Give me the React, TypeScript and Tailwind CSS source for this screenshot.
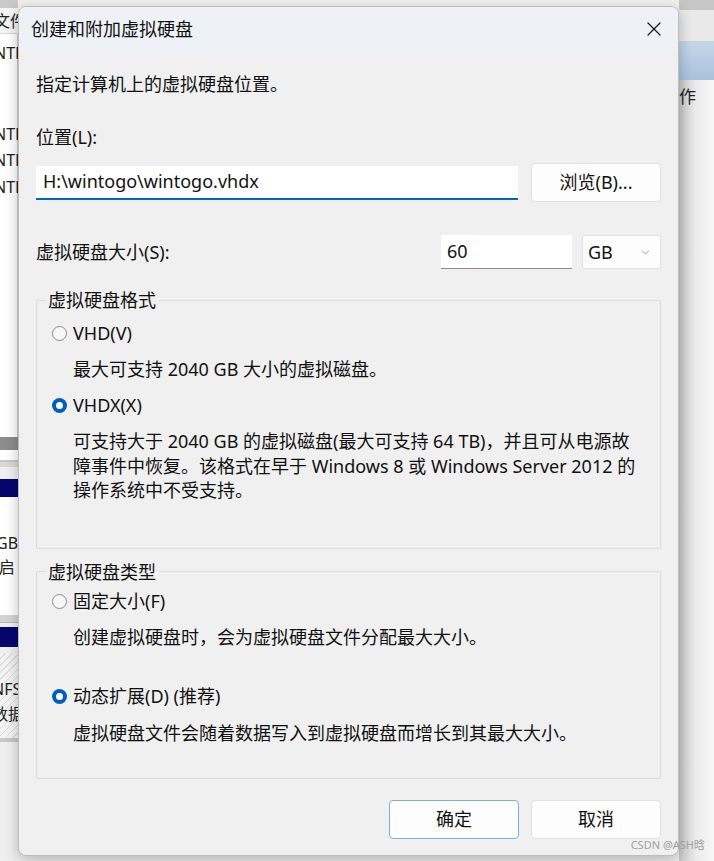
import { X, ChevronDown } from "lucide-react";

const font = { fontFamily: '"Segoe UI", "Noto Sans", "Noto Sans CJK SC", sans-serif' };

function Radio({ checked, label }: { checked?: boolean; label: string }) {
  return (
    <div className="flex items-center h-[24px] text-[18px] text-[#111]">
      {checked ? (
        <span className="w-[15px] h-[15px] rounded-full bg-[#005fb8] flex items-center justify-center mr-[6px]">
          <span className="w-[7px] h-[7px] rounded-full bg-white" />
        </span>
      ) : (
        <span className="w-[15px] h-[15px] rounded-full border border-[#8a8a8a] bg-[#f7f7f7] mr-[6px]" />
      )}
      {label}
    </div>
  );
}

function BackgroundLeft() {
  return (
    <div className="w-[18px] h-full overflow-hidden bg-[#f0f0f0] flex flex-col text-[16px] text-[#222]">
      <div className="h-[8px] bg-[#c9c9c9]" />
      <div className="h-[26px] bg-[#f4f4f4] border-b border-[#d6d6d6] leading-[26px] -ml-[6px] whitespace-nowrap">文件</div>
      <div className="h-[403px] bg-white border-r border-[#cfcfcf] -ml-[6px] whitespace-nowrap flex flex-col">
        <div className="mt-[6px] h-[26px] leading-[26px]">NTF</div>
        <div className="mt-[55px] h-[26px] leading-[26px]">NTF</div>
        <div className="h-[27px] leading-[27px]">NTF</div>
        <div className="h-[27px] leading-[27px]">NTF</div>
      </div>
      <div className="h-[13px] bg-[#8d8d8d]" />
      <div className="h-[12px] bg-white border-b-2 border-[#c9c9c9]" />
      <div className="h-[5px] bg-[#d8d8d8]" />
      <div className="h-[18px] bg-[#06066f] mt-[12px]" />
      <div className="h-[118px] bg-white flex flex-col -ml-[4px] whitespace-nowrap">
        <div className="mt-[34px] h-[24px] leading-[24px]">GB</div>
        <div className="h-[24px] leading-[24px] -ml-[2px]">(启</div>
      </div>
      <div className="h-[8px] bg-[#d4d4d4] border-b border-[#b8b8b8]" />
      <div className="h-[20px] bg-[#06066f] mt-[4px]" />
      <div className="h-[85px] mt-[6px] bg-[repeating-linear-gradient(135deg,#f4f4f4_0px,#f4f4f4_4px,#dcdcdc_4px,#dcdcdc_5px)] flex flex-col -ml-[8px] whitespace-nowrap">
        <div className="mt-[24px] h-[25px] leading-[25px]">NFS</div>
        <div className="h-[25px] leading-[25px]">数据</div>
      </div>
      <div className="h-[4px] bg-[#c8c8c8]" />
      <div className="flex-1 bg-[#efefef]" />
    </div>
  );
}

function BackgroundRight() {
  return (
    <div className="flex-1 h-full overflow-hidden flex flex-col text-[17px] text-[#222]">
      <div className="h-[10px] bg-[#c6c6c6]" />
      <div className="h-[32px] bg-[#e9e9e9] border-b border-[#d0d0d0]" />
      <div className="h-[38px] bg-gradient-to-b from-[#c5d6ea] to-[#a9c2de]" />
      <div className="flex-1 bg-gradient-to-r from-[#c8c8c8] via-[#ececec] to-[#f6f6f6] flex flex-col">
        <div className="mt-[5px] h-[24px] leading-[24px] -ml-[17px] whitespace-nowrap">操作</div>
      </div>
    </div>
  );
}

function Dialog() {
  return (
    <div className="absolute left-[18px] top-[6px] w-[661px] rounded-[8px] bg-[#f0f0f0] border border-[#bdbdbd] shadow-[0_4px_14px_rgba(0,0,0,0.25)] overflow-hidden">
      <div className="h-[44px] bg-[#eef2f6] flex items-center justify-between pl-[12px] pr-[12px]">
        <span className="text-[18px] text-[#111]">创建和附加虚拟硬盘</span>
        <X className="w-[24px] h-[24px] text-[#1a1a1a]" strokeWidth={1.2} />
      </div>
      <div className="pl-[17px] pr-[17px] pb-[16px] text-[18px] text-[#111]">
        <div className="mt-[21px] h-[24px] leading-[24px]">指定计算机上的虚拟硬盘位置。</div>
        <div className="mt-[29px] h-[24px] leading-[24px]">位置(L):</div>
        <div className="mt-[14px] flex items-center h-[39px]">
          <div className="w-[482px] h-[34px] bg-white border-b-2 border-[#0067c0] pl-[7px] flex items-center">
            H:\wintogo\wintogo.vhdx
          </div>
          <button className="ml-auto w-[130px] h-[39px] bg-[#fdfdfd] border border-[#e1e1e1] rounded-[4px] text-[18px] text-[#111]">
            浏览(B)...
          </button>
        </div>
        <div className="mt-[33px] flex items-center h-[34px]">
          <span>虚拟硬盘大小(S):</span>
          <div className="ml-auto w-[131px] h-[34px] bg-white border-b border-[#8a8a8a] pl-[6px] flex items-center">60</div>
          <div className="ml-[10px] w-[79px] h-[34px] bg-[#fdfdfd] border border-[#e1e1e1] rounded-[3px] pl-[5px] pr-[8px] flex items-center justify-between">
            <span>GB</span>
            <ChevronDown className="w-[13px] h-[13px] text-[#777]" strokeWidth={1.3} />
          </div>
        </div>
        <fieldset className="mt-[19px] border border-[#dcdcdc] rounded-[2px] pl-[8px] pr-[10px] pb-[45px]">
          <legend className="px-[3px] h-[24px] leading-[24px]">虚拟硬盘格式</legend>
          <div className="mt-[9px] ml-[7px]"><Radio label="VHD(V)" /></div>
          <div className="mt-[12px] ml-[28px] leading-[24px]">最大可支持 2040 GB 大小的虚拟磁盘。</div>
          <div className="mt-[12px] ml-[7px]"><Radio checked label="VHDX(X)" /></div>
          <div className="mt-[12px] ml-[28px] leading-[24.5px] whitespace-nowrap">
            可支持大于 2040 GB 的虚拟磁盘(最大可支持 64 TB)，并且可从电源故<br />
            障事件中恢复。该格式在早于 Windows 8 或 Windows Server 2012 的<br />
            操作系统中不受支持。
          </div>
        </fieldset>
        <fieldset className="mt-[11px] border border-[#dcdcdc] rounded-[2px] pl-[8px] pr-[10px] pb-[33px]">
          <legend className="px-[3px] h-[24px] leading-[24px]">虚拟硬盘类型</legend>
          <div className="mt-[6px] ml-[7px]"><Radio label="固定大小(F)" /></div>
          <div className="mt-[11px] ml-[28px] leading-[24px]">创建虚拟硬盘时，会为虚拟硬盘文件分配最大大小。</div>
          <div className="mt-[36px] ml-[7px]"><Radio checked label="动态扩展(D) (推荐)" /></div>
          <div className="mt-[12px] ml-[28px] leading-[24px]">虚拟硬盘文件会随着数据写入到虚拟硬盘而增长到其最大大小。</div>
        </fieldset>
        <div className="mt-[21px] flex justify-end gap-[12px]">
          <button className="w-[130px] h-[39px] bg-[#fdfdfd] border border-[#79aee0] rounded-[4px] text-[18px] text-[#111]">确定</button>
          <button className="w-[130px] h-[39px] bg-[#fdfdfd] border border-[#e1e1e1] rounded-[4px] text-[18px] text-[#111]">取消</button>
        </div>
      </div>
    </div>
  );
}

export default function App() {
  return (
    <div className="relative w-[714px] h-[861px] overflow-hidden bg-[#f0f0f0]" style={font}>
      <div className="flex h-full">
        <BackgroundLeft />
        <div className="w-[661px] h-full bg-[#f0f0f0]" />
        <BackgroundRight />
      </div>
      <Dialog />
      <div className="absolute right-[9px] bottom-[8px] text-[11px] text-[#a0a0a0]">CSDN @ASH晗</div>
    </div>
  );
}
